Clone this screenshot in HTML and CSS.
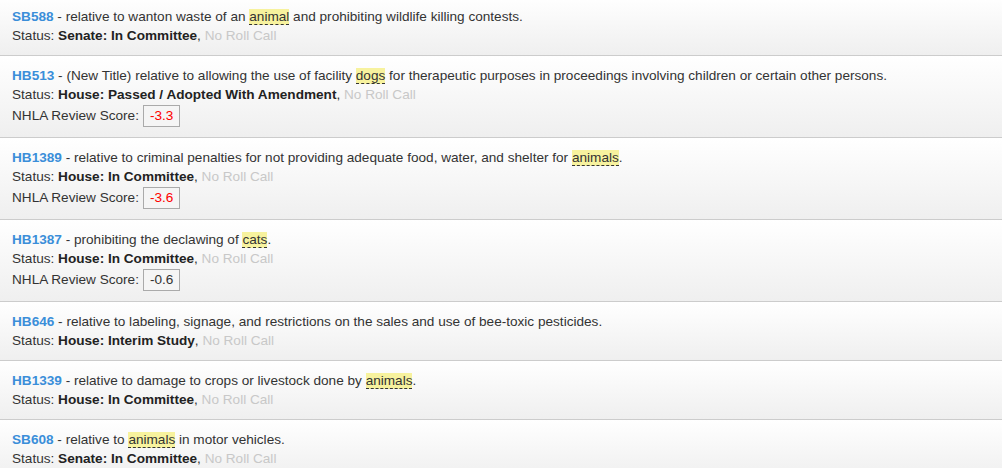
FILE: index.html
```html
<!DOCTYPE html>
<html>
<head>
<meta charset="utf-8">
<link rel="stylesheet" href="styles.css">
</head>
<body>
<div class="list">
  <div class="bill">
    <div class="line"><a class="num">SB588</a> - relative to wanton waste of an <span class="hl">animal</span> and prohibiting wildlife killing contests.</div>
    <div class="line">Status: <b>Senate: In Committee</b>, <span class="muted">No Roll Call</span></div>
  </div>
  <div class="bill">
    <div class="line"><a class="num">HB513</a> - (New Title) relative to allowing the use of facility <span class="hl">dogs</span> for therapeutic purposes in proceedings involving children or certain other persons.</div>
    <div class="line">Status: <b>House: Passed / Adopted With Amendment</b>, <span class="muted">No Roll Call</span></div>
    <div class="score-line">NHLA Review Score: <span class="score neg">-3.3</span></div>
  </div>
  <div class="bill">
    <div class="line"><a class="num">HB1389</a> - relative to criminal penalties for not providing adequate food, water, and shelter for <span class="hl">animals</span>.</div>
    <div class="line">Status: <b>House: In Committee</b>, <span class="muted">No Roll Call</span></div>
    <div class="score-line">NHLA Review Score: <span class="score neg">-3.6</span></div>
  </div>
  <div class="bill">
    <div class="line"><a class="num">HB1387</a> - prohibiting the declawing of <span class="hl">cats</span>.</div>
    <div class="line">Status: <b>House: In Committee</b>, <span class="muted">No Roll Call</span></div>
    <div class="score-line">NHLA Review Score: <span class="score">-0.6</span></div>
  </div>
  <div class="bill">
    <div class="line"><a class="num">HB646</a> - relative to labeling, signage, and restrictions on the sales and use of bee-toxic pesticides.</div>
    <div class="line">Status: <b>House: Interim Study</b>, <span class="muted">No Roll Call</span></div>
  </div>
  <div class="bill">
    <div class="line"><a class="num">HB1339</a> - relative to damage to crops or livestock done by <span class="hl">animals</span>.</div>
    <div class="line">Status: <b>House: In Committee</b>, <span class="muted">No Roll Call</span></div>
  </div>
  <div class="bill">
    <div class="line"><a class="num">SB608</a> - relative to <span class="hl">animals</span> in motor vehicles.</div>
    <div class="line">Status: <b>Senate: In Committee</b>, <span class="muted">No Roll Call</span></div>
  </div>
</div>
</body>
</html>
```
FILE: styles.css
```css
html, body {
  margin: 0;
  padding: 0;
  background: #ffffff;
  overflow: hidden;
}
body {
  font-family: "Liberation Sans", Arial, sans-serif;
  font-size: 13.6px;
  color: #333333;
}
.list {
  margin-top: -3px;
}
.bill {
  padding: 10px 12px 10px 12px;
  background: linear-gradient(to bottom, #ffffff 0%, #efefef 100%);
  border-bottom: 1px solid #cccccc;
}
.line {
  line-height: 19px;
  height: 19px;
  white-space: nowrap;
}
.num {
  color: #3a8ed9;
  font-weight: bold;
  text-decoration: none;
}
.hl {
  background: #f7f29e;
  border-bottom: 1px dashed #333333;
}
b {
  color: #222222;
}
.muted {
  color: #c8c8c8;
}
.score-line {
  display: flex;
  align-items: center;
  height: 23px;
  line-height: 19px;
}
.score {
  display: inline-block;
  margin-left: 4px;
  padding: 0 6px;
  height: 20px;
  line-height: 20px;
  border: 1px solid #aaaaaa;
  background: #f5f5f5;
  color: #333333;
}
.score.neg {
  color: #ff0000;
}
```
